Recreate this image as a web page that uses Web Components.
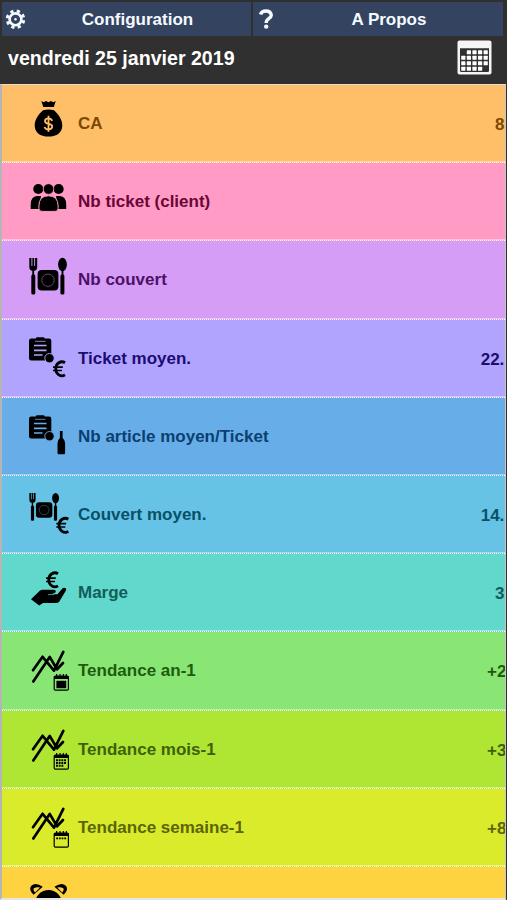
<!DOCTYPE html>
<html lang="fr">
<head>
<meta charset="utf-8">
<title>Tableau de bord</title>
<style>
html,body{margin:0;height:900px;overflow:hidden;background:#303030}
body{font-family:"Liberation Sans",Arial,sans-serif;font-weight:700}
</style>
</head>
<body>
<dash-app></dash-app>
<script>
const euro = (x, y) => `<g transform="translate(${x} ${y})" fill="none" stroke="#000"><path d="M12 2.2A6.2 7 0 1 0 12 14.4" stroke-width="2.8"/><path d="M0 6.6H9.8M0 10H9" stroke-width="1.7"/></g>`;
const clipboard = `<rect x="29" y="18.5" width="22.3" height="22" rx="2.2"/><rect x="36" y="17.3" width="8.5" height="3.6" rx="1"/><path d="M35 21.3h10.5" stroke="var(--bg)" stroke-width=".8"/><path d="M34 25.5h12.5M34 30.3h12.5M34 35h8.5" stroke="var(--bg)" stroke-width="1.7"/><circle cx="49.5" cy="38.2" r="4.7" stroke="var(--bg)" stroke-width=".9"/>`;
const cutlery = `<path d="M29.3 17v8.6q0 3.8 2.5 4.1h2.8q2.6-.3 2.6-4.1V17z"/><path d="M31.9 17v8M34.6 17v8" stroke="var(--bg)" stroke-width=".9"/><path d="M33.2 28v8"  stroke="#000" stroke-width="1.8"/><rect x="31.3" y="33.5" width="4" height="20" rx="1.5"/><rect x="37.6" y="29" width="20.8" height="20.5" rx="4"/><circle cx="48" cy="39.2" r="6.2" fill="none" stroke="var(--bg)" stroke-opacity=".55" stroke-width=".8"/><ellipse cx="62.5" cy="23.5" rx="4.4" ry="6.8"/><path d="M62.5 28v8" stroke="#000" stroke-width="1.8"/><rect x="60.4" y="33.5" width="4" height="20" rx="1.5"/>`;
const trend = `<path d="M33 38.2L42.6 24.8 54 38.6 63.3 19.9M33.3 49.5L49.7 24.9 57 37.3 63 31" fill="none" stroke="#000" stroke-width="2.7" stroke-linecap="round" stroke-linejoin="round"/>`;
const cal = inner => `<rect x="54.2" y="44" width="14.2" height="14.2" rx="1.2" fill="none" stroke="#000" stroke-width="1.2"/><path d="M54 45.5h14.6" stroke="#000" stroke-width="3"/><path d="M56.6 42v3M60 42v3M63.3 42v3M66.3 42v3" stroke="#000" stroke-width="1.2"/>${inner}`;
const icons = {
  bag: `<path d="M41.3 16l2.4 1.2 2.3-1.2 2.5 1.2 2.4-1.2 2.3 1.2 2.5-1.2-1.8 6H43.3z"/><path d="M43 25.3Q48.5 23.8 54 25.3C58 29 62.4 34.5 62.3 40.5 62.2 47.5 57 51.6 48.5 51.6S34.8 47.5 34.7 40.5C34.6 34.5 39 29 43 25.3z"/><path d="M52.2 35.8Q51.2 33.3 48.5 33.3 45 33.3 45 36q0 2.2 3.6 2.8t3.6 2.8q0 2.8-3.7 2.8-3.2 0-4-2.5M48.5 30.7v16" fill="none" stroke="var(--bg)" stroke-width="1.8"/>`,
  people: `<circle cx="38.3" cy="26" r="5.1"/><circle cx="58.6" cy="26" r="5.1"/><path d="M30.7 46V41Q31 33.5 37 33h4L39 46zM66.2 46V41Q66 33.5 60 33h-4L58 46z"/><circle cx="48.5" cy="26" r="5.3" stroke="var(--bg)" stroke-width=".8"/><path d="M38.9 45.5V43Q39 32.8 48.5 32.8T58.1 43V45.5Q58.1 48.4 55 48.4H42Q38.9 48.4 38.9 45.5z" stroke="var(--bg)" stroke-width="1"/>`,
  cutlery,
  ticketEuro: clipboard + euro(53, 40.5),
  ticketBottle: clipboard + `<path d="M59.9 33h2.7v7q2.5 2 2.5 5v10q0 1.3-1.3 1.3h-5q-1.3 0-1.3-1.3V45q0-3 2.4-5z"/>`,
  cutleryEuro: `<g transform="translate(6.2 4.2) scale(.79 .76)">${cutlery}</g>` + euro(56.3, 41),
  hand: euro(46, 17.5) + `<path d="M31 45.3L39.5 37Q41 35.8 43 35.8H53.5Q56.5 36 55.5 38.5L52 40.2H57.5L62.3 34.5Q64 33 65.8 34.3 66.6 35.2 65.8 36.8L59.2 47.8Q58 49 56 49H43L39.2 51.6z"/><path d="M48 40.6H54" stroke="var(--bg)" stroke-width=".7"/>`,
  year: trend + cal(`<rect x="56.4" y="48.8" width="9.8" height="7.4"/>`),
  month: trend + cal(`<path d="M56 49.3h10.6M56 52h10.6M56 54.7h7.8" stroke="#000" stroke-width="1.9" stroke-dasharray="1.9 .8"/>`),
  week: trend + cal(`<path d="M56.2 49.4h10.4" stroke="#000" stroke-width="1.7" stroke-dasharray="1.8 .9"/>`),
  alarm: `<path d="M33.5 27.8Q28.2 22.5 31.3 18.8 35.5 14.8 42.8 19.8z"/><path d="M63.7 27.8Q69 22.5 65.9 18.8 61.7 14.8 54.4 19.8z"/><path d="M35 25.4Q32.6 22.8 34 21.3 36 19.8 40 20.4zM62.2 25.4Q64.6 22.8 63.2 21.3 61.2 19.8 57.2 20.4z" fill="var(--bg)"/><circle cx="48.5" cy="36.5" r="13.5"/>`
};
const rows = [
  ['CA','bag','#ffbf69','#7d4900','8',10],
  ['Nb ticket (client)','people','#ff9bc5','#690636','',0],
  ['Nb couvert','cutlery','#d69df6','#4d1168','',0],
  ['Ticket moyen.','ticketEuro','#b1a4ff','#1c0c70','22.',24.3],
  ['Nb article moyen/Ticket','ticketBottle','#67ade8','#0b3f70','',0],
  ['Couvert moyen.','cutleryEuro','#66c3e6','#095066','14.',24.3],
  ['Marge','hand','#61d8cc','#125d59','3',10],
  ['Tendance an-1','year','#89e674','#1e5b0d','+2',18],
  ['Tendance mois-1','month','#afe633','#3f600b','+3',18],
  ['Tendance semaine-1','week','#d9eb2b','#5b6408','+8',18],
  ['C','alarm','#ffd340','#765800','',0]
];

class NavButton extends HTMLElement {
  connectedCallback() {
    this.attachShadow({mode:'open'}).innerHTML = `<style>
      :host{display:grid;grid-template-columns:28px 1fr;align-items:center;background:#34435f;color:#f4faff;height:34px;font-size:17px;line-height:34px}
      .t{text-align:center;white-space:nowrap;padding:1px var(--pr,0) 0 0;height:33px}
      ::slotted(svg){display:block}
    </style><slot name="icon"></slot><span class="t"><slot></slot></span>`;
  }
}
customElements.define('nav-button', NavButton);

class DateBar extends HTMLElement {
  connectedCallback() {
    let cells = '';
    for (let r = 0; r < 4; r++) for (let c = 0; c < 5; c++)
      if (!(r === 0 && c === 0) && !(r === 3 && c === 4))
        cells += `<rect x="${4.2 + c*5.6}" y="${10.2 + r*5.5}" width="4.2" height="4" rx=".5"/>`;
    this.attachShadow({mode:'open'}).innerHTML = `<style>
      :host{display:flex;justify-content:space-between;align-items:flex-start;height:47px;flex:none;padding:0 15px 0 8px;color:#fff;font-size:19.6px}
      span{line-height:22px;padding-top:10px}
      svg{display:block;margin-top:3px}
    </style><span><slot></slot></span>
    <svg width="35" height="35" viewBox="0 0 35 35"><rect x=".5" y=".5" width="34" height="34" rx="2" fill="#f5f5f5"/><path d="M3 8.2h29v22.5q0 1.3-1.3 1.3H4.3Q3 32 3 30.7z" fill="#303030"/><g fill="#fff">${cells}</g></svg>`;
  }
}
customElements.define('date-bar', DateBar);

class StatRow extends HTMLElement {
  connectedCallback() {
    const [label, icon, bg, fg, value, width] = rows[+this.getAttribute('index')];
    this.attachShadow({mode:'open'}).innerHTML = `<style>
      :host{display:flex;box-sizing:border-box;height:78.2px;flex:none;--bg:${bg};background:${bg};color:${fg};font-size:17px;overflow:hidden;padding-left:24px}
      :host(:not(:last-child)){border-bottom:1px dotted #fff;box-shadow:inset 0 -1px #ffffff66}
      svg{display:block;flex:none}
      .l{padding:29px 0 0 8px;line-height:20px;white-space:nowrap}
      .v{margin-left:auto;padding-top:30px;line-height:20px;width:${width}px;overflow:hidden;white-space:nowrap}
    </style><svg width="44" height="77" viewBox="26 0 44 77">${icons[icon]}</svg><span class="l">${label}</span><span class="v">${value}</span>`;
  }
}
customElements.define('stat-row', StatRow);

class DashApp extends HTMLElement {
  connectedCallback() {
    this.attachShadow({mode:'open'}).innerHTML = `<style>
      :host{display:flex;flex-direction:column;height:900px;width:507px;overflow:hidden}
      nav{display:grid;flex:none;grid-template-columns:249px 250px;column-gap:2px;padding:2px 4px 0 2px;height:35px}
      nav-button{--pr:6px}
      .list{flex:1;min-height:0;display:flex;flex-direction:column;overflow:hidden;box-sizing:border-box;width:506px;border:solid;border-width:1px 1px 2px 2px;border-color:#e3ded6 #c9c5c0 #e6e6e6 #b5b5b5;background:#ffd340}
    </style>
    <nav>
      <nav-button><svg slot="icon" width="28" height="34" viewBox="2 2 28 34"><g transform="translate(15.5 19.3)" fill="none" stroke="#f4faff"><circle r="5.9" stroke-width="2.6"/><circle r="8.3" stroke-width="3" stroke-dasharray="3.2 3.318" stroke-dashoffset="-1"/><circle r="1.2" fill="#f4faff" stroke="none"/></g></svg>Configuration</nav-button>
      <nav-button><svg slot="icon" width="28" height="34" viewBox="0 0 28 34"><path d="M7.5 12.5Q8.5 9 13 9T18.3 13q0 2-2.6 3.7-2.5 1.6-2.5 4.2" fill="none" stroke="#f4faff" stroke-width="3.4"/><circle cx="13.2" cy="24.6" r="2.2" fill="#f4faff"/></svg>A Propos</nav-button>
    </nav>
    <date-bar>vendredi 25 janvier 2019</date-bar>
    <div class="list">${rows.map((_, i) => `<stat-row index="${i}"></stat-row>`).join('')}</div>`;
  }
}
customElements.define('dash-app', DashApp);
</script>
</body>
</html>
